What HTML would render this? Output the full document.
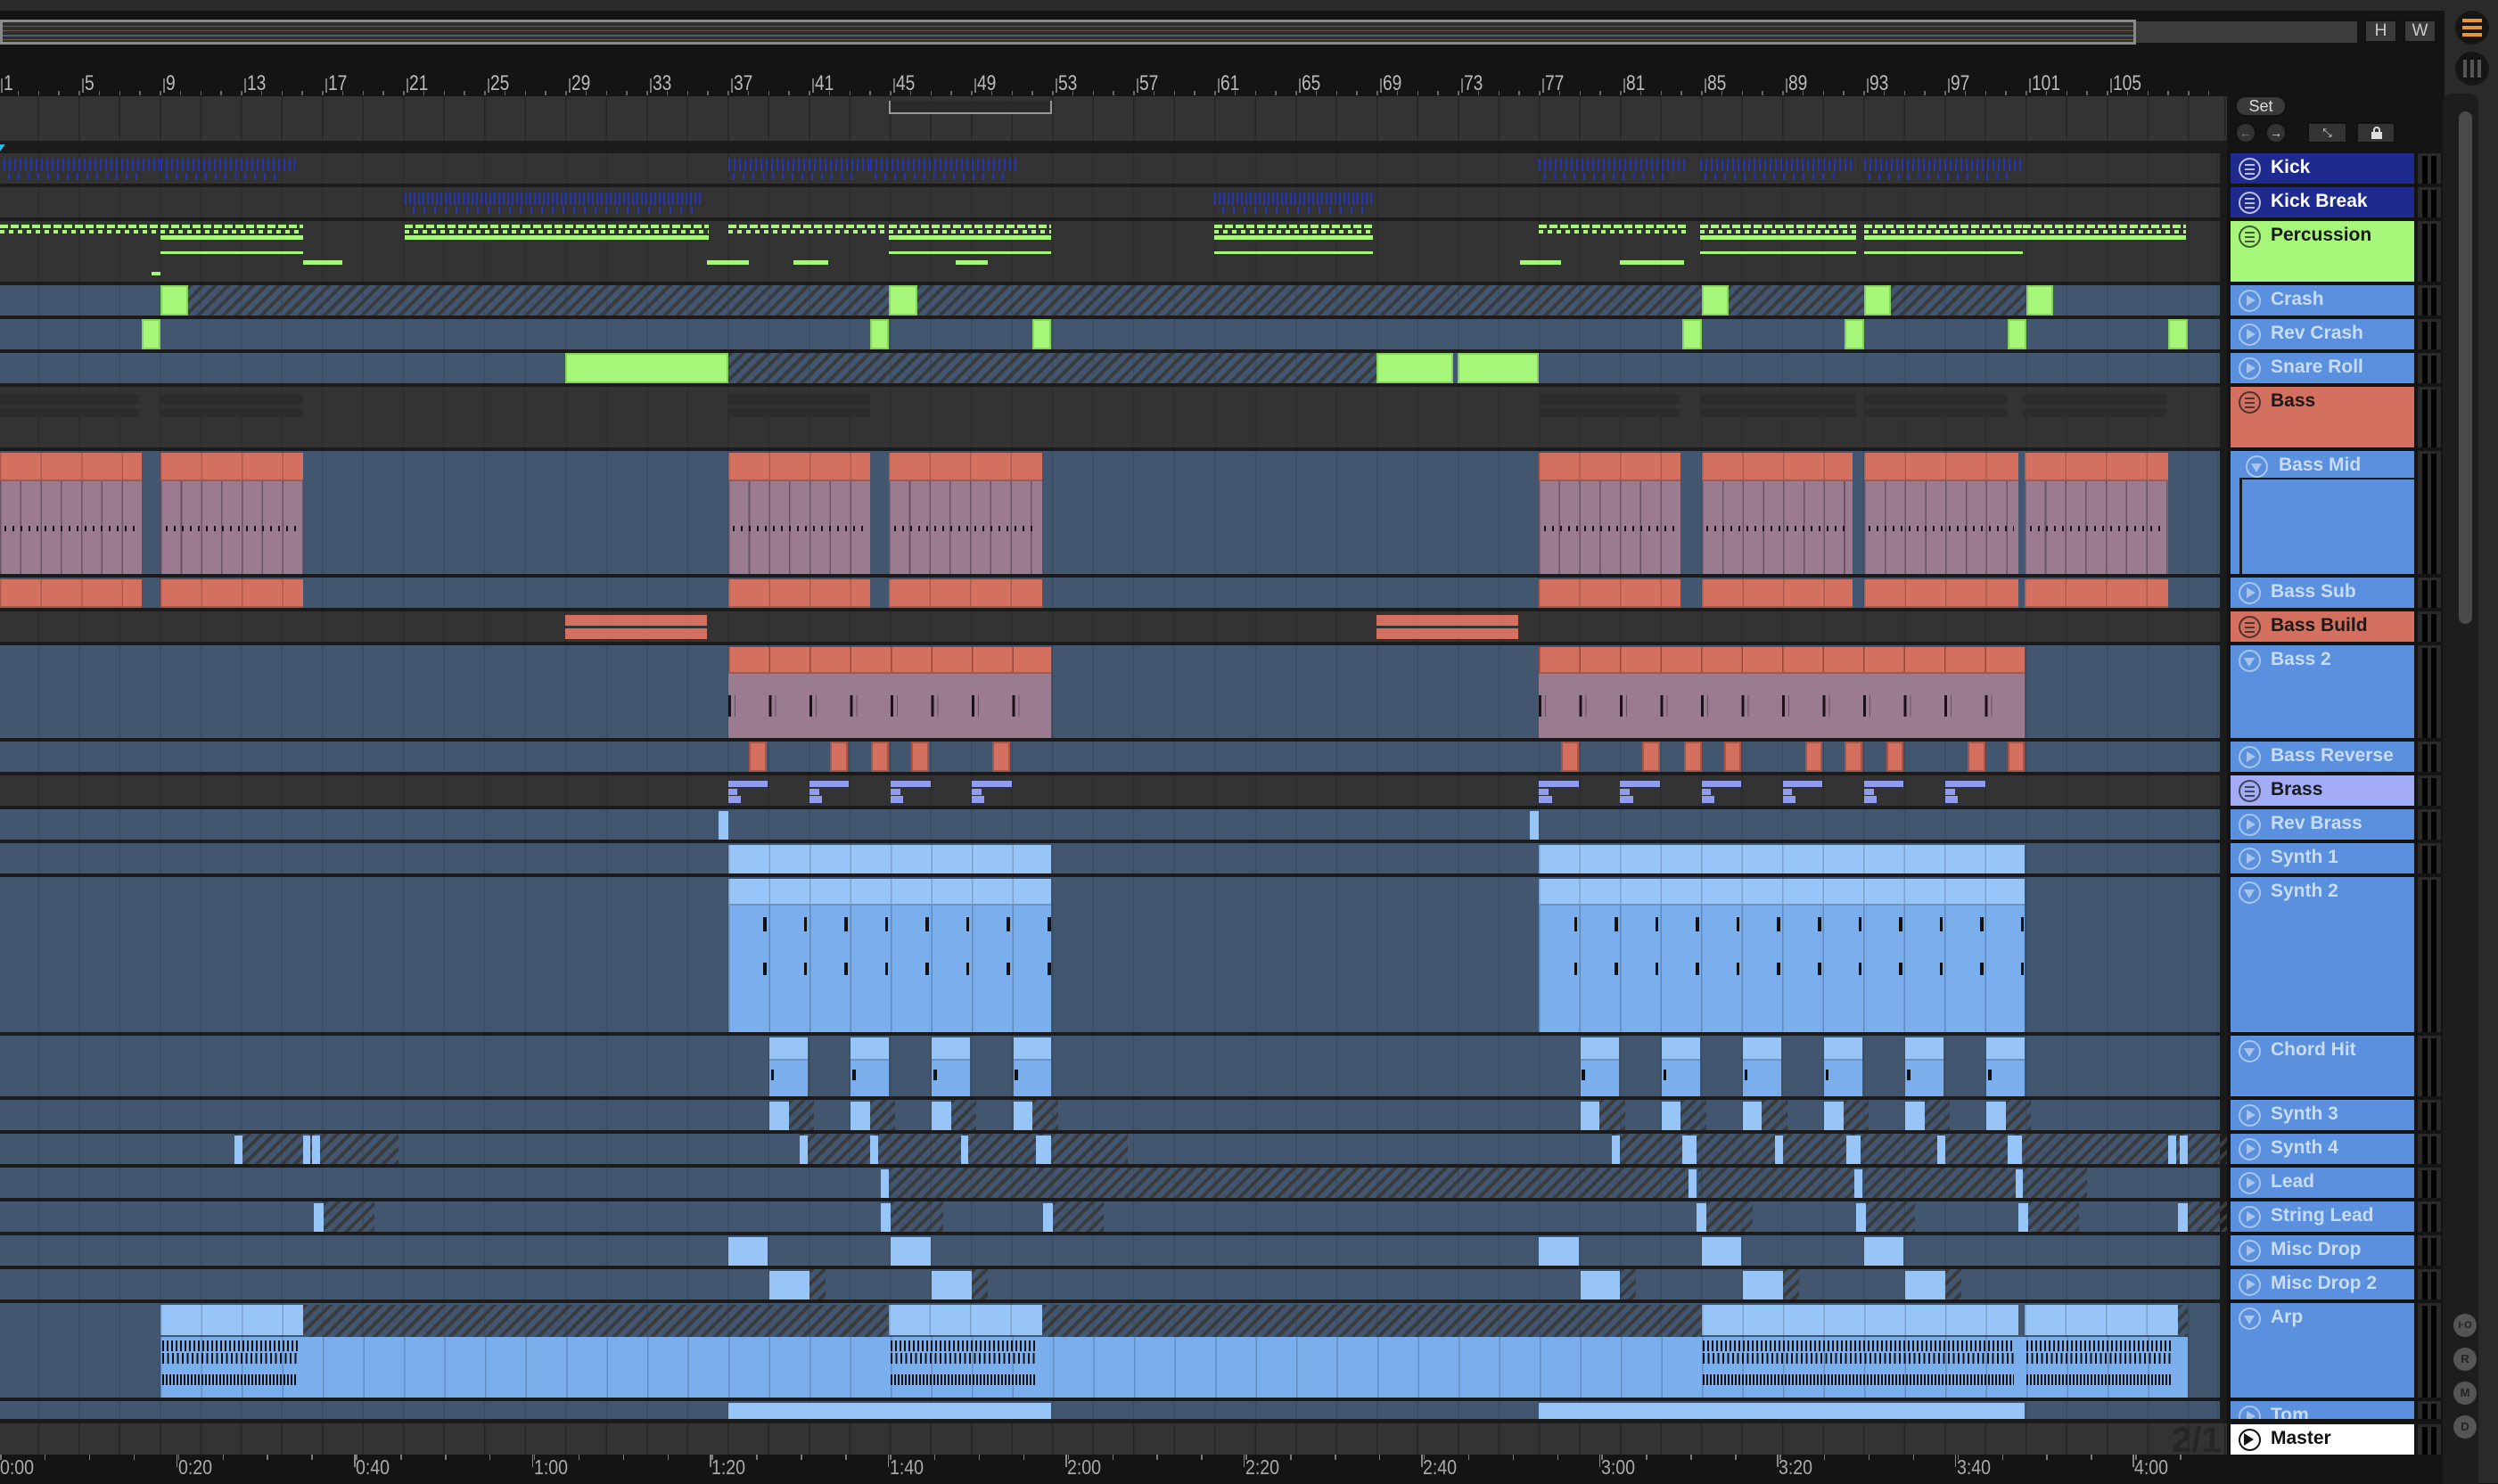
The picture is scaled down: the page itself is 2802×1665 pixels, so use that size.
<!DOCTYPE html>
<html><head><meta charset="utf-8"><style>
*{box-sizing:border-box;margin:0;padding:0}
body{width:2802px;height:1664px;background:#141414;position:relative;overflow:hidden;font-family:"Liberation Sans",sans-serif}
.a{position:absolute}
.lane{position:absolute;left:0;width:2490px;background-image:repeating-linear-gradient(90deg,rgba(0,0,0,.13) 0 1.5px,transparent 1.5px 45.5px);background-position:-3px 0}
.blue{background-color:#42576f}
.gray{background-color:#333}
.hdr{position:absolute;left:2502px;width:206px;font-weight:bold;font-size:21px;padding-left:45px;padding-top:4px}
.ic{position:absolute;left:9px;top:5px;width:25px;height:25px;border-radius:50%;border:2px solid currentColor;opacity:.7}
.mtr{position:absolute;left:2712px;width:26px;background:#2a2a2a}
.mtr:before{content:"";position:absolute;left:5px;top:3px;width:6px;bottom:0;background:#000}
.mtr:after{content:"";position:absolute;left:15px;top:3px;width:6px;bottom:0;background:#000}
.num{position:absolute;top:80px;font-size:24px;color:#bbb;transform:scaleX(.8);transform-origin:left}
.tl{position:absolute;top:1633px;font-size:23px;color:#aaa;transform:scaleX(.85);transform-origin:left}
.rb{position:absolute;left:2752px;width:26px;height:26px;border-radius:50%;background:#555;color:#222;font-size:13px;font-weight:bold;text-align:center;line-height:26px}
</style></head><body>
<div class="a" style="left:0;top:0;width:2802px;height:12px;background:#2a2a2a"></div>
<div class="a" style="left:2742px;top:12px;width:60px;height:1652px;background:#2a2a2a"></div>
<div class="a" style="left:2740px;top:105px;width:40px;height:1560px;background:#1d1d1d;border-radius:10px 10px 0 0"></div>
<div class="a" style="left:2758px;top:125px;width:15px;height:575px;background:#4a4a4a;border-radius:8px"></div>
<div class="a" style="left:2754px;top:12px;width:38px;height:38px;border-radius:50%;background:#151515"></div>
<div class="a" style="left:2762px;top:21px;width:22px;height:4px;background:#e8962f;box-shadow:0 8px 0 #e8962f,0 16px 0 #e8962f"></div>
<div class="a" style="left:2754px;top:58px;width:38px;height:38px;border-radius:50%;background:#151515"></div>
<div class="a" style="left:2763px;top:67px;width:4px;height:20px;background:#555;box-shadow:8px 0 0 #555,16px 0 0 #555"></div>
<div class="a" style="left:0;top:22px;width:2396px;height:28px;background:#8a8a8a"></div>
<div class="a" style="left:3px;top:25px;width:2390px;height:22px;background:#2e2e2e;background-image:linear-gradient(#2e2e2e 4px,#4d6a3a 4px 5px,#2e2e2e 5px 9px,#6a5540 9px 10px,#2e2e2e 10px 14px,#4a5d7a 14px 16px,#2e2e2e 16px 19px,#6a5b3a 19px 20px,#2e2e2e 20px)"></div>
<div class="a" style="left:2396px;top:24px;width:248px;height:24px;background:#3c3c3c"></div>
<div class="a" style="left:2652px;top:22px;width:37px;height:26px;background:#3a3a3a;border:2px solid #111;color:#ccc;font-size:19px;text-align:center;line-height:22px">H</div>
<div class="a" style="left:2696px;top:22px;width:37px;height:26px;background:#3a3a3a;border:2px solid #111;color:#ccc;font-size:19px;text-align:center;line-height:22px">W</div>
<div class="a" style="left:0;top:108px;width:2498px;height:50px;background:#333;background-image:repeating-linear-gradient(90deg,rgba(0,0,0,.25) 0 1.5px,transparent 1.5px 45.5px);background-position:-3px 0"></div>
<div class="a" style="left:997px;top:113px;width:183px;height:15px;border:2px solid #999;border-top:none;background:#2a2a2a"></div>
<div class="a" style="left:2507px;top:107px;width:58px;height:24px;border-radius:12px;background:#3a3a3a;border:2px solid #111;color:#ddd;font-size:18px;text-align:center;line-height:20px">Set</div>
<div class="a" style="left:2507px;top:137px;width:24px;height:24px;border-radius:50%;background:#333;border:2px solid #111;color:#777;font-size:14px;text-align:center;line-height:20px">&#8592;</div>
<div class="a" style="left:2541px;top:137px;width:24px;height:24px;border-radius:50%;background:#333;border:2px solid #111;color:#ddd;font-size:14px;text-align:center;line-height:20px">&#8594;</div>
<div class="a" style="left:2588px;top:137px;width:45px;height:24px;background:#333;border:2px solid #111;color:#ddd;font-size:13px;text-align:center;line-height:20px">&#10529;</div>
<div class="a" style="left:2643px;top:137px;width:44px;height:24px;background:#333;border:2px solid #111"><div class="a" style="left:15px;top:9px;width:12px;height:8px;background:#ddd"></div><div class="a" style="left:17px;top:3px;width:8px;height:9px;border:2px solid #ddd;border-radius:4px 4px 0 0"></div></div>
<div id="root"></div>
<div class="a" style="left:0;top:1597px;width:2498px;height:35px;background:#333;background-image:repeating-linear-gradient(90deg,rgba(0,0,0,.25) 0 1.5px,transparent 1.5px 45.5px);background-position:-3px 0"></div>
<div class="a" style="left:2436px;top:1594px;font-size:40px;font-weight:bold;color:#262626">2/1</div>
<div class="hdr" style="top:1598px;height:34px;background:#fff;color:#111"><span class="ic" style="color:#111;opacity:1"></span><span style="position:absolute;left:15px;top:10px;width:0;height:0;border-left:11px solid #111;border-top:7px solid transparent;border-bottom:7px solid transparent"></span>Master</div>
<div class="mtr" style="top:1598px;height:34px"></div>
<div class="rb" style="top:1474px;font-size:11px">I·O</div>
<div class="rb" style="top:1512px">R</div>
<div class="rb" style="top:1550px">M</div>
<div class="rb" style="top:1588px">D</div>
<script>
var S=1.787,R=document.getElementById('root');
function el(st,cls,txt){var d=document.createElement('div');d.className='a '+(cls||'');d.style.cssText=st;if(txt)d.innerHTML=txt;R.appendChild(d);return d}
for(var n=1;n<=105;n+=4){var x=-3+(n-1)*22.75;el('left:'+(x+4)+'px;top:88px;width:1.5px;height:16px;background:#777');el('','num',''+n).style.left=(x+7)+'px';}
for(var x=-3;x<2480;x+=22.75)el('left:'+x+'px;top:102px;width:1.5px;height:5px;background:#666');
var tl=['0:00','0:20','0:40','1:00','1:20','1:40','2:00','2:20','2:40','3:00','3:20','3:40','4:00'];
tl.forEach(function(t,i){var x=i*199.5;el('left:'+(x-2)+'px;top:1632px;width:1.5px;height:14px;background:#888');el('left:'+x+'px','tl',t);});
for(var x=0;x<2480;x+=49.9)el('left:'+x+'px;top:1632px;width:1.5px;height:6px;background:#777');
var T=[
['Kick',172,34,'gray','#1f2a8e','#fff','m'],
['Kick Break',210,34,'gray','#1f2a8e','#fff','m'],
['Percussion',248,68,'gray','#a6f67a','#1a1a1a','m'],
['Crash',320,34,'blue','#5a90dd','#c8dcf6','p'],
['Rev Crash',358,34,'blue','#5a90dd','#c8dcf6','p'],
['Snare Roll',396,34,'blue','#5a90dd','#c8dcf6','p'],
['Bass',434,68,'gray','#d4705f','#1a1a1a','m'],
['Bass Mid',506,138,'blue','#5a90dd','#c8dcf6','d'],
['Bass Sub',648,34,'blue','#5a90dd','#c8dcf6','p'],
['Bass Build',686,34,'gray','#d4705f','#1a1a1a','m'],
['Bass 2',724,104,'blue','#5a90dd','#c8dcf6','d'],
['Bass Reverse',832,34,'blue','#5a90dd','#c8dcf6','p'],
['Brass',870,34,'gray','#a3acf7','#1a1a1a','m'],
['Rev Brass',908,34,'blue','#5a90dd','#c8dcf6','p'],
['Synth 1',946,34,'blue','#5a90dd','#c8dcf6','p'],
['Synth 2',984,174,'blue','#5a90dd','#c8dcf6','d'],
['Chord Hit',1162,68,'blue','#5a90dd','#c8dcf6','d'],
['Synth 3',1234,34,'blue','#5a90dd','#c8dcf6','p'],
['Synth 4',1272,34,'blue','#5a90dd','#c8dcf6','p'],
['Lead',1310,34,'blue','#5a90dd','#c8dcf6','p'],
['String Lead',1348,34,'blue','#5a90dd','#c8dcf6','p'],
['Misc Drop',1386,34,'blue','#5a90dd','#c8dcf6','p'],
['Misc Drop 2',1424,34,'blue','#5a90dd','#c8dcf6','p'],
['Arp',1462,106,'blue','#5a90dd','#c8dcf6','d'],
['Tom',1572,20,'blue','#5a90dd','#c8dcf6','p']];
el('left:0;top:158px;width:2498px;height:12px;background:#1c1c1c');
el('left:0;top:170px;width:2498px;height:1427px;background:#1b1b1b');
var TR={};
T.forEach(function(t){TR[t[0]]=t;
 el('top:'+t[1]+'px;height:'+t[2]+'px','lane '+t[3]);
 var h=el('top:'+t[1]+'px;height:'+t[2]+'px;background:'+t[4]+';color:'+t[5]+';overflow:hidden','hdr');
 h.style.position='absolute';h.innerHTML='<span class="ic"></span>'+t[0];
 var ic=h.firstChild;
 if(t[6]=='m')ic.innerHTML='<span style="position:absolute;left:5px;top:5px;width:11px;height:2px;background:currentColor;box-shadow:0 5px 0 currentColor,0 10px 0 currentColor"></span>';
 if(t[6]=='p')ic.innerHTML='<span style="position:absolute;left:7px;top:4px;border-left:10px solid currentColor;border-top:6.5px solid transparent;border-bottom:6.5px solid transparent"></span>';
 if(t[6]=='d')ic.innerHTML='<span style="position:absolute;left:4px;top:7px;border-top:10px solid currentColor;border-left:6.5px solid transparent;border-right:6.5px solid transparent"></span>';
 if(t[0]=='Bass Mid'){h.innerHTML='<span class="ic" style="left:17px"></span><span style="position:absolute;left:54px;top:4px">Bass Mid</span>';h.firstChild.innerHTML=ic.innerHTML;h.style.padding='0';}
 el('top:'+t[1]+'px;height:'+t[2]+'px','mtr');
});
el('left:2512px;top:536px;width:196px;height:108px;background:#5a90dd;border-left:3px solid #1b1b1b;border-top:2px solid #1b1b1b');
function C(tr,a,b,bg,top,h,extra){var t=TR[tr];top=top||0;h=h||t[2]-top;
 return el('left:'+(a*S)+'px;width:'+((b-a)*S)+'px;top:'+(t[1]+top)+'px;height:'+h+'px;background:'+bg+';'+(extra||''));}
var G='#a6f67a',SA='#d4705f',MV='#9b7b90',LB='#98c5f8',MB='#7aaeed',LV='#8f9cf0';
var div='background-image:repeating-linear-gradient(90deg,rgba(0,0,0,.18) 0 1.5px,transparent 1.5px 45.5px);';
function H(tr,a,b,top,h){C(tr,a,b,'',top,h,'background:repeating-linear-gradient(135deg,#393b3e 0 4px,transparent 4px 10px)')}
function ticks(tr,a,b,col,top,h,gap){C(tr,a,b,'repeating-linear-gradient(90deg,'+col+' 0 2px,transparent 2px '+gap+'px)',top,h)}
[[2,100],[101,185],[457,546],[546,640],[966,1060],[1067,1165],[1170,1270]].forEach(function(r){ticks('Kick',r[0],r[1],'#2436b4',6,14,6);ticks('Kick',r[0]+3,r[1]-10,'#2436b4',22,8,11)});
[[254,440],[762,862]].forEach(function(r){ticks('Kick Break',r[0],r[1],'#2436b4',6,14,5);ticks('Kick Break',r[0]+5,r[1]-3,'#2436b4',22,8,12)});
[[0,190],[254,445],[457,555],[558,660],[762,862],[966,1060],[1067,1165],[1170,1270],[1270,1372]].forEach(function(r){
 C('Percussion',r[0],r[1],'repeating-linear-gradient(90deg,'+G+' 0 9px,transparent 9px 12px)',4,4);
 C('Percussion',r[0],r[1],'repeating-linear-gradient(90deg,'+G+' 0 5px,transparent 5px 10px)',10,4);});
[[101,190],[254,445],[558,660],[762,862],[1067,1165],[1170,1270],[1270,1372]].forEach(function(r){C('Percussion',r[0],r[1],G,16,5);});
[[101,190],[558,660],[762,862],[1067,1165],[1170,1270]].forEach(function(r){C('Percussion',r[0],r[1],G,34,3);});
[[190,215],[444,470],[498,520],[600,620],[954,980],[1017,1057]].forEach(function(r){C('Percussion',r[0],r[1],G,44,5);});
C('Percussion',95,101,G,57,4);
[[118,558],[576,1068],[1085,1170],[1187,1272]].forEach(function(r){H('Crash',r[0],r[1])});
[[101,118],[558,576],[1068,1085],[1170,1187],[1272,1289]].forEach(function(r){C('Crash',r[0],r[1],G,0,34,'border:2px solid #86d45d')});
[89,546,648,1056,1158,1260,1361].forEach(function(x){C('Rev Crash',x,x+12,G,0,34,'border:2px solid #86d45d')});
H('Snare Roll',457,864);
[[355,457],[864,912],[915,966]].forEach(function(r){C('Snare Roll',r[0],r[1],G,0,34,'border:2px solid #86d45d')});
[[0,88],[101,190],[457,546],[966,1055],[1067,1165],[1170,1260],[1270,1360]].forEach(function(r){C('Bass',r[0],r[1],'#2c2c2c',8,12);C('Bass',r[0],r[1],'#2c2c2c',24,10)});
var bm=[[0,89],[101,190],[457,546],[558,654],[966,1055],[1068,1163],[1170,1267],[1271,1361]];
bm.forEach(function(r){C('Bass Mid',r[0],r[1],SA,2,32,'border-bottom:2px solid #a8564a;'+div);
 C('Bass Mid',r[0],r[1],MV,34,104,'background-image:repeating-linear-gradient(90deg,rgba(60,40,60,.5) 0 1.5px,transparent 1.5px 22.75px);');
 ticks('Bass Mid',r[0]+3,r[1]-3,'#1a1118',84,6,9);
 C('Bass Sub',r[0],r[1],SA,2,32,'border-bottom:2px solid #a8564a;'+div);});
[[355,444],[864,953]].forEach(function(r){C('Bass Build',r[0],r[1],SA,4,12);C('Bass Build',r[0],r[1],SA,19,12)});
[[457,660],[966,1271]].forEach(function(r){C('Bass 2',r[0],r[1],SA,2,30,'border-bottom:2px solid #a8564a;background-image:repeating-linear-gradient(90deg,rgba(90,30,20,.5) 0 1.5px,transparent 1.5px 45.5px)');
 C('Bass 2',r[0],r[1],MV,32,72,'background-image:repeating-linear-gradient(90deg,#1a1118 0 3px,transparent 3px 7px,rgba(60,40,60,.5) 7px 8px,transparent 8px 45.5px);background-size:100% 24px;background-repeat:repeat-x;background-position:0 24px');});
[470,521,547,572,623,980,1031,1057,1082,1133,1158,1184,1235,1260].forEach(function(x){C('Bass Reverse',x,x+11,SA,0,34,'border:2px solid #a8564a')});
[457,508,559,610,966,1017,1068,1119,1170,1221].forEach(function(x){C('Brass',x,x+25,LV,6,7);C('Brass',x,x+6,LV,15,7);C('Brass',x,x+8,LV,23,8)});
[451,960].forEach(function(x){C('Rev Brass',x,x+6,LB,2,32)});
[[457,660],[966,1271]].forEach(function(r){C('Synth 1',r[0],r[1],LB,2,32,div);
 C('Synth 2',r[0],r[1],LB,2,30,div+'border-bottom:2px solid #6d94c0');
 C('Synth 2',r[0],r[1],MB,32,142,'background-image:repeating-linear-gradient(90deg,rgba(70,100,140,.5) 0 1.5px,transparent 1.5px 45.5px,rgba(70,100,140,.5) 45.5px 47px,transparent 47px 91px);');
 C('Tom',r[0],r[1],LB,2,18);});
[[457,660],[966,1271]].forEach(function(r){for(var x=r[0];x<r[1];x+=25.5){C('Synth 2',x+22,x+24,'#111',45,16);C('Synth 2',x+22,x+24,'#111',96,14)}});
[483,534,585,636,992,1043,1094,1145,1196,1247].forEach(function(x){C('Chord Hit',x,x+24,LB,2,26,'border-bottom:2px solid #6d94c0');C('Chord Hit',x,x+24,MB,28,40);C('Chord Hit',x+1,x+3,'#111',38,12);
 H('Synth 3',x+12,x+28);C('Synth 3',x,x+12,LB,2,32);});
[[147,250],[502,708],[1012,1398]].forEach(function(r){H('Synth 4',r[0],r[1])});
[147,190,196,502,546,603,650,655,1012,1056,1060,1114,1159,1163,1216,1260,1264,1361,1368].forEach(function(x){C('Synth 4',x,x+5,LB,2,32)});
H('Lead',558,1060);H('Lead',1066,1164);H('Lead',1170,1265);H('Lead',1270,1310);
[553,1060,1164,1265].forEach(function(x){C('Lead',x,x+5,LB,2,32)});
[[197,235],[553,592],[655,693],[1065,1100],[1165,1202],[1267,1305],[1367,1398]].forEach(function(r){H('String Lead',r[0]+6,r[1]);C('String Lead',r[0],r[0]+6,LB,2,32)});
[457,559,966,1068,1170].forEach(function(x){C('Misc Drop',x,x+25,LB,2,32)});
[483,585,992,1094,1196].forEach(function(x){C('Misc Drop 2',x,x+25,LB,2,32);H('Misc Drop 2',x+25,x+35)});
C('Arp',101,1373,MB,38,68,div);
H('Arp',190,558,2,36);H('Arp',654,1068,2,36);H('Arp',1367,1373,2,36);
[[101,190],[558,654],[1068,1267],[1271,1367]].forEach(function(r){C('Arp',r[0],r[1],LB,2,34,div);
 ticks('Arp',r[0]+1,r[1]-3,'#111',42,12,5);ticks('Arp',r[0]+1,r[1]-3,'#111',56,12,5.5);ticks('Arp',r[0]+1,r[1]-3,'#111',80,12,4);});
el('left:0;top:162px;width:0;height:0;border-top:8px solid #3ab0e0;border-right:6px solid transparent');
</script>
</body></html>
